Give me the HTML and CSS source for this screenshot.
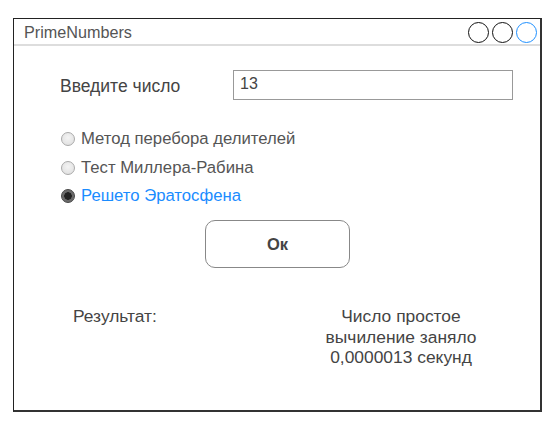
FILE: index.html
```html
<!DOCTYPE html>
<html lang="ru">
<head>
<meta charset="utf-8">
<title>PrimeNumbers</title>
<link rel="stylesheet" href="styles.css">
</head>
<body>
<div class="window">
  <div class="titlebar">
    <span class="title">PrimeNumbers</span>
    <div class="controls">
      <span class="ctl"></span>
      <span class="ctl"></span>
      <span class="ctl ctl-blue"></span>
    </div>
  </div>
  <div class="content">
    <div class="input-row">
      <span class="label">Введите число</span>
      <div class="field">13</div>
    </div>
    <div class="radios">
      <div class="radio-row"><span class="radio"></span><span class="radio-label">Метод перебора делителей</span></div>
      <div class="radio-row"><span class="radio"></span><span class="radio-label">Тест Миллера-Рабина</span></div>
      <div class="radio-row"><span class="radio radio-on"></span><span class="radio-label radio-label-on">Решето Эратосфена</span></div>
    </div>
    <div class="button">Ок</div>
    <div class="result">
      <span class="result-label">Результат:</span>
      <div class="result-text">Число простое<br>вычиление заняло<br>0,0000013 секунд</div>
    </div>
  </div>
</div>
</body>
</html>
```
FILE: styles.css
```css
body {
  margin: 0;
  background: #fff;
  font-family: "Liberation Sans", Arial, sans-serif;
  color: #444;
}
.window {
  margin: 18px 0 0 13px;
  width: 529px;
  height: 394px;
  box-sizing: border-box;
  border: 1px solid #222;
  border-right: 2px solid #333;
  border-bottom: 2px solid #333;
  display: flex;
  flex-direction: column;
}
.titlebar {
  height: 27px;
  box-sizing: border-box;
  border-bottom: 2px solid #ddd;
  display: flex;
  align-items: center;
  justify-content: space-between;
  padding: 0 3px 0 10px;
}
.title {
  font-size: 16.2px;
  color: #555;
  margin-top: 2px;
}
.controls {
  display: flex;
  gap: 3px;
  margin-top: 1px;
}
.ctl {
  width: 21px;
  height: 21px;
  box-sizing: border-box;
  border: 1.4px solid #111;
  border-radius: 50%;
}
.ctl-blue {
  border-color: #1e90ff;
}
.content {
  padding: 24px 27px 0 46px;
  display: flex;
  flex-direction: column;
}
.input-row {
  display: flex;
  align-items: center;
  height: 30px;
}
.label {
  width: 173px;
  font-size: 17.5px;
  color: #444;
  margin-top: 2px;
}
.field {
  width: 280px;
  height: 30px;
  box-sizing: border-box;
  border: 1.5px solid #999;
  padding: 4px 0 0 6px;
  font-size: 16px;
  color: #444;
}
.radios {
  margin-top: 30px;
  display: flex;
  flex-direction: column;
  gap: 10.5px;
}
.radio-row {
  display: flex;
  align-items: center;
  height: 18px;
  gap: 6px;
}
.radio {
  width: 14px;
  height: 14px;
  box-sizing: border-box;
  margin-left: 1px;
  border-radius: 50%;
  border: 1px solid #aaa;
  background: radial-gradient(circle at 50% 40%, #f4f4f4 0%, #dcdcdc 100%);
}
.radio-on {
  border: 1px solid #444;
  background: radial-gradient(circle, #222 0 3.5px, #666 4px, #777 100%);
}
.radio-label {
  font-size: 16.7px;
  color: #555;
}
.radio-label-on {
  color: #1a8cff;
}
.button {
  margin: 15px 0 0 145px;
  width: 145px;
  height: 48px;
  box-sizing: border-box;
  border: 1.5px solid #888;
  border-radius: 10px;
  display: flex;
  align-items: center;
  justify-content: center;
  font-size: 16.5px;
  font-weight: bold;
  color: #444;
}
.result {
  margin-top: 38px;
  display: flex;
  padding-left: 13px;
  font-size: 17.4px;
  line-height: 20.5px;
  color: #444;
}
.result-label {
  width: 228px;
}
.result-text {
  width: 200px;
  text-align: center;
}
```
